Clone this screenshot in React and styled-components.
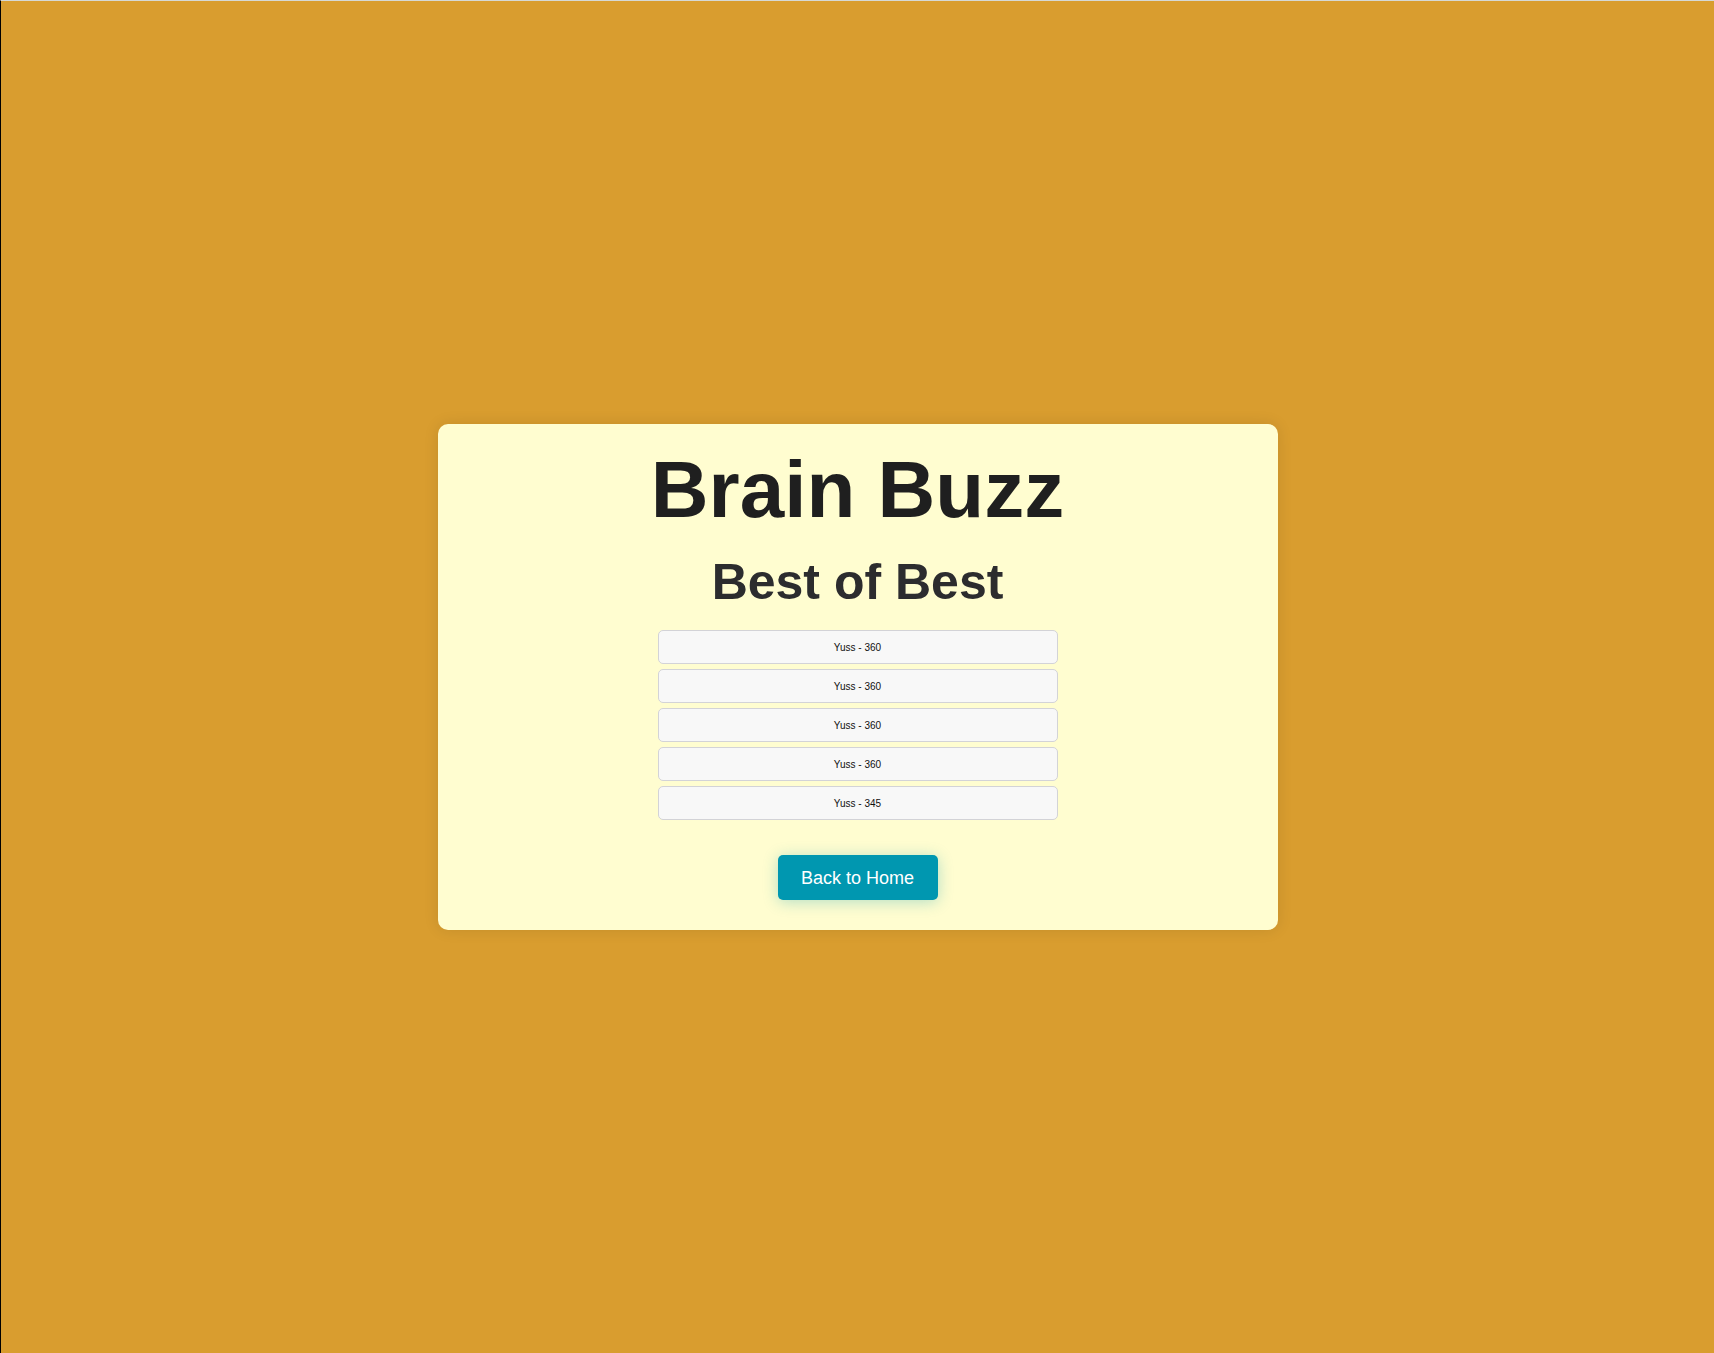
import React from 'react';
import styled, { createGlobalStyle } from 'styled-components';

const GlobalStyle = createGlobalStyle`
  *, *::before, *::after { box-sizing: border-box; }
  body {
    margin: 0;
    font-family: Helvetica, "Liberation Sans", Arial, sans-serif;
    font-size: 10px;
    color: #111;
    background: #d99d2f;
  }
`;

const Page = styled.main`
  display: flex;
  align-items: center;
  justify-content: center;
  min-height: 100vh;
  border-top: 1px solid #d6d9d6;
  border-left: 1px solid #000;
`;

const Card = styled.section`
  display: flex;
  flex-direction: column;
  align-items: center;
  width: 100%;
  max-width: 840px;
  padding: 20px 20px 30px;
  border-radius: 10px;
  background: #fffdd0;
  box-shadow: 0 0 15px rgba(0, 0, 0, 0.1);
  text-align: center;
`;

const Title = styled.h1`
  margin: 0 0 16px;
  font-size: 80px;
  line-height: 92px;
  color: #1f1f1f;
`;

const Subtitle = styled.h2`
  margin: 0 0 18px;
  font-size: 50px;
  line-height: 60px;
  color: #2c2c2e;
`;

const ScoreList = styled.ol`
  display: flex;
  flex-direction: column;
  gap: 5px;
  width: 100%;
  max-width: 400px;
  margin: 0 0 35px;
  padding: 0;
  list-style: none;
`;

const ScoreItem = styled.li`
  padding: 11px 10px 9px;
  border: 1px solid #d3d3d7;
  border-radius: 5px;
  background: #f8f8f8;
  line-height: 12px;
`;

const HomeButton = styled.button`
  padding: 13px 20px 11px;
  min-width: 160px;
  border: 0;
  border-radius: 5px;
  background: #0097b0;
  box-shadow: 0 2px 15px rgba(0, 151, 176, 0.3);
  color: #fff;
  font-family: inherit;
  font-size: 18px;
  line-height: 21px;
  white-space: nowrap;
  cursor: pointer;
`;

const scores = [
  { name: 'Yuss', score: 360 },
  { name: 'Yuss', score: 360 },
  { name: 'Yuss', score: 360 },
  { name: 'Yuss', score: 360 },
  { name: 'Yuss', score: 345 },
];

export default function App() {
  return (
    <>
      <GlobalStyle />
      <Page>
        <Card>
          <Title>Brain Buzz</Title>
          <Subtitle>Best of Best</Subtitle>
          <ScoreList>
            {scores.map((entry, index) => (
              <ScoreItem key={index}>{`${entry.name} - ${entry.score}`}</ScoreItem>
            ))}
          </ScoreList>
          <HomeButton type="button">Back to Home</HomeButton>
        </Card>
      </Page>
    </>
  );
}
